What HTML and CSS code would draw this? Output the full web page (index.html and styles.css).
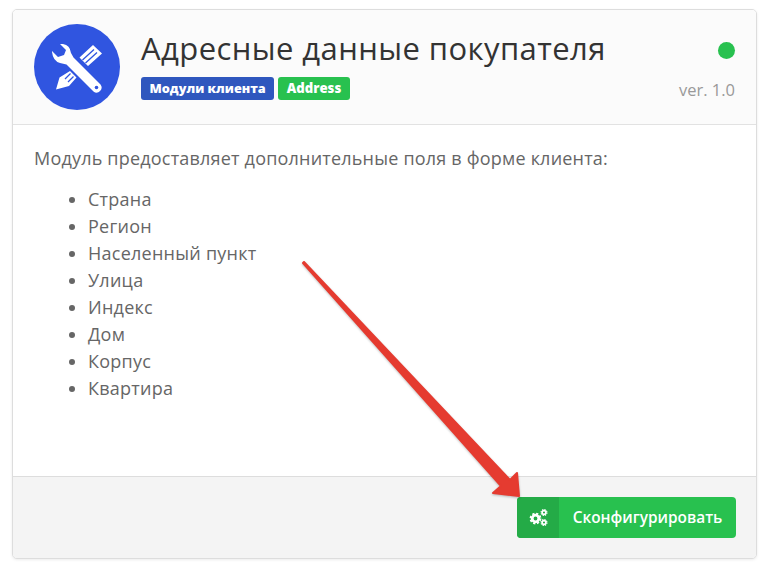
FILE: index.html
```html
<!DOCTYPE html>
<html lang="ru">
<head>
<meta charset="utf-8">
<title>Адресные данные покупателя</title>
<link rel="stylesheet" href="styles.css">
</head>
<body>
<div class="card">
  <header class="head">
    <div class="logo">
      <svg width="86" height="86" viewBox="0 0 86 86"><circle cx="43" cy="43" r="43" fill="#3055e0"/>
        <path fill="#fff" d="M59 21 L68 29.500 L54 42 L45.500 33.500 Z M36 47 L42.500 53.500 L35 62 L22 65.500 L25.500 53.500 Z"/>
        <path stroke="#3055e0" stroke-width="1.300" fill="none" d="M60 25.600 L48.500 36 M63 28.400 L51.500 39 M36.500 49.500 L31 55 M39.500 52.500 L34 58"/>
        <path fill="#fff" d="M26 20 L29 20 Q36 21 37 29 L39.500 33.500 L66.500 60.500 A5 5 0 0 1 59.500 67.500 L32.500 40.500 L26 39 Q19 37 18 28 L18 27 L24 33 L30 31 L32 26 Z"/>
        <circle cx="62.500" cy="63.500" r="1.800" fill="#3055e0"/>
      </svg>
    </div>
    <div class="info">
      <h1 class="title">Адресные данные покупателя</h1>
      <div class="tags"><span class="tag tag-blue">Модули клиента</span><span class="tag tag-green">Address</span></div>
    </div>
    <div class="meta"><span class="dot"></span><span class="ver">ver. 1.0</span></div>
  </header>
  <main class="body">
    <p class="lead">Модуль предоставляет дополнительные поля в форме клиента:</p>
    <ul class="list">
      <li>Страна</li><li>Регион</li><li>Населенный пункт</li><li>Улица</li><li>Индекс</li><li>Дом</li><li>Корпус</li><li>Квартира</li>
    </ul>
  </main>
  <footer class="foot">
    <button class="btn"><span class="btn-ico">
      <svg width="19" height="17" viewBox="0 0 19 17" fill="none" stroke="#fff">
        <circle cx="6.500" cy="9.500" r="3.300" stroke-width="2.800"/>
        <circle cx="6.500" cy="9.500" r="5" stroke-width="1.800" stroke-dasharray="2.200 1.730"/>
        <circle cx="15" cy="3.500" r="1.900" stroke-width="1.700"/>
        <circle cx="15" cy="3.500" r="3" stroke-width="1.100" stroke-dasharray="1.300 1.060"/>
        <circle cx="15" cy="13.500" r="1.900" stroke-width="1.700"/>
        <circle cx="15" cy="13.500" r="3" stroke-width="1.100" stroke-dasharray="1.300 1.060"/>
      </svg>
    </span><span class="btn-text">Сконфигурировать</span></button>
  </footer>
</div>
<svg class="arrow" width="768" height="569" viewBox="0 0 768 569"><path fill="#e53b30" stroke="#e53b30" stroke-width="2" stroke-linejoin="round" d="M303 263 L304 262 L510 480 L517 473 L519 496 L493 493 L501 486 Z"/></svg>
</body>
</html>
```
FILE: styles.css
```css
* { box-sizing: border-box; }
html, body { margin: 0; height: 100%; background: #fff; }
body { padding: 9px 12px 10px; font-family: "Open Sans", "Noto Sans", sans-serif; color: #666; overflow: hidden; position: relative; }
.card { width: 745px; height: 550px; border: 1px solid #ddd; border-radius: 5px; box-shadow: 0 1px 3px rgba(0,0,0,.08); display: flex; flex-direction: column; overflow: hidden; background: #fff; }
.head { height: 115px; flex: none; display: flex; padding: 14px 21px 0; background: #fbfbfb; border-bottom: 1px solid #e2e2e2; }
.logo { width: 86px; height: 86px; flex: none; }
.logo svg { display: block; }
.info { margin-left: 21px; flex: 1; }
.title { margin: 0; font-size: 31px; letter-spacing: .42px; line-height: 48px; font-weight: 400; color: #333; white-space: nowrap; }
.tags { display: flex; gap: 4px; margin-top: 5px; }
.tag { height: 23px; line-height: 23px; padding: 0 8.5px; border-radius: 3px; font-size: 12.7px; font-weight: 800; color: #fff; }
.tag-blue { background: #2f57be; }
.tag-green { background: #28c14f; font-size: 13.2px; }
.meta { display: flex; flex-direction: column; align-items: flex-end; }
.dot { width: 17px; height: 17px; border-radius: 50%; background: #28c14f; margin-top: 18px; }
.ver { margin-top: 19px; font-size: 16.5px; line-height: 24px; color: #999; }
.body { flex: 1; padding: 20px 21px 0; font-size: 18px; }
.lead { margin: 0; line-height: 27px; letter-spacing: .2px; }
.list { margin: 14px 0 0; padding: 0 0 0 54px; }
.list li { line-height: 27px; letter-spacing: .25px; }
.foot { height: 82px; flex: none; display: flex; justify-content: flex-end; padding: 20px 20px 0 0; background: #f4f4f4; border-top: 1px solid #ddd; }
.btn { display: flex; width: 219px; height: 41px; padding: 0; border: 0; border-radius: 4px; background: #28c14f; color: #fff; font-family: inherit; overflow: hidden; }
.btn-ico { width: 42px; height: 41px; background: #24ab47; display: flex; align-items: center; justify-content: center; }
.btn-text { flex: 1; text-align: center; line-height: 41px; font-size: 15.4px; font-weight: 600; }
.arrow { position: absolute; left: 0; top: 0; pointer-events: none; filter: drop-shadow(0 1px 1px rgba(0,0,0,.25)); }
```
